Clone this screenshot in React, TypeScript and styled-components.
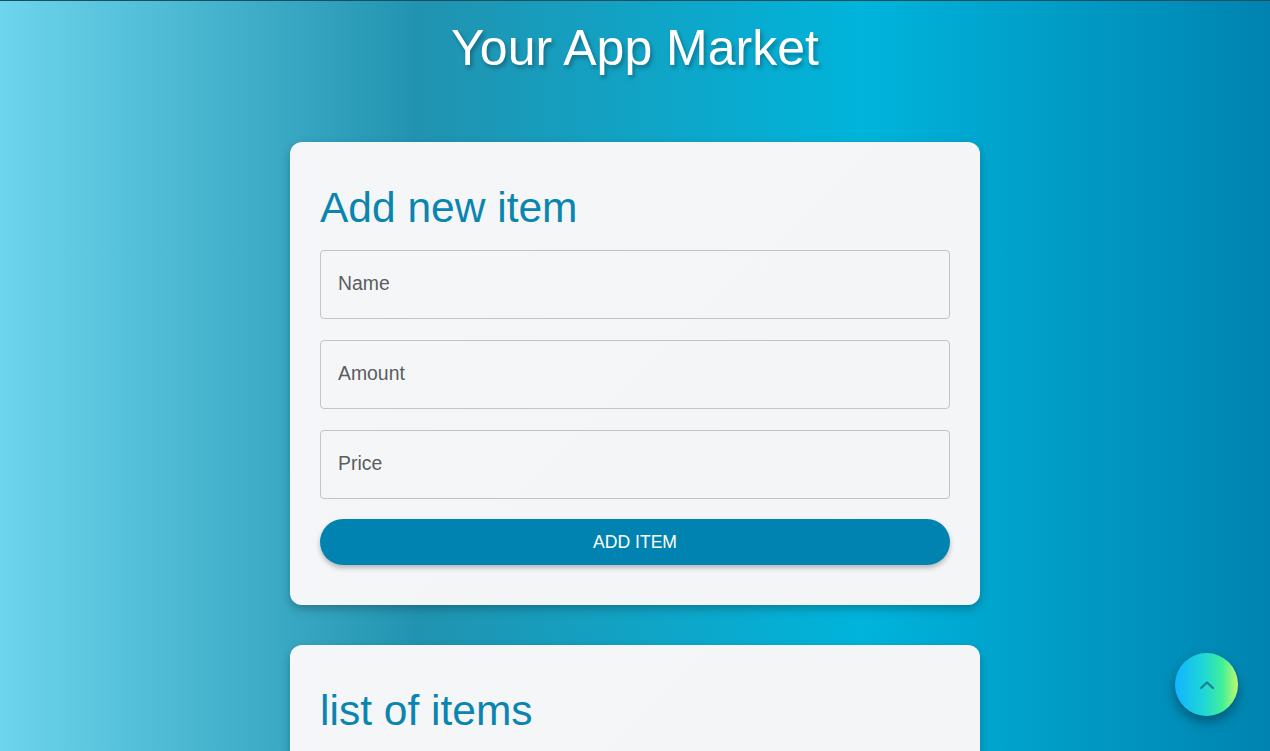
import React from "react";
import styled, { createGlobalStyle } from "styled-components";

const Global = createGlobalStyle`
  html, body { margin: 0; padding: 0; }
  body {
    font-family: "Liberation Sans", Arial, sans-serif;
    overflow: hidden;
  }
  * { box-sizing: border-box; }
`;

const Page = styled.div`
  min-height: 100vh;
  border-top: 1px solid #1b4f5e;
  background: linear-gradient(to right, #6dd5ed 0%, #2193b0 33%, #00b4db 68%, #0083b0 100%);
  display: flex;
  flex-direction: column;
  align-items: center;
  padding-bottom: 40px;
`;

const Title = styled.h1`
  margin: 20px 0 66px;
  font-size: 50px;
  font-weight: 400;
  color: #fff;
  text-shadow: 2px 3px 4px rgba(0, 0, 0, 0.3);
  line-height: 55px;
`;

const Card = styled.section`
  width: 690px;
  background: linear-gradient(135deg, #f5f6f7, #f3f5f7);
  border-radius: 12px;
  box-shadow: 0 4px 10px rgba(0, 0, 0, 0.25);
  padding: 30px 30px 40px;
  display: flex;
  flex-direction: column;
  margin-bottom: 40px;
`;

const CardTitle = styled.h2`
  margin: 12px 0 19px;
  font-size: 42.5px;
  line-height: 47px;
  font-weight: 400;
  color: #0a85b0;
`;

const Form = styled.form`
  display: flex;
  flex-direction: column;
  gap: 21px;
`;

const Input = styled.input`
  height: 69px;
  width: 100%;
  border: 1px solid #c2c4c6;
  border-radius: 4px;
  background: transparent;
  padding: 0 17px 3px;
  font-family: "Liberation Sans", Arial, sans-serif;
  font-size: 19.4px;
  color: #333;
  outline: none;
  &::placeholder { color: #5a5d61; }
`;

const Button = styled.button`
  margin-top: -1px;
  height: 46px;
  border: none;
  border-radius: 23px;
  background: #0083b0;
  color: #fff;
  font-family: "Liberation Sans", Arial, sans-serif;
  font-size: 17.6px;
  text-transform: uppercase;
  box-shadow: 0 3px 5px rgba(0, 0, 0, 0.25);
  cursor: pointer;
`;

const Fab = styled.button`
  position: fixed;
  left: 1175px;
  top: 653px;
  width: 63px;
  height: 63px;
  border-radius: 50%;
  border: none;
  background: linear-gradient(to right, #12b4ff 0%, #1fd6d8 45%, #3fef9a 75%, #c4f76a 100%);
  box-shadow: 0 6px 12px rgba(0, 0, 0, 0.35);
  display: flex;
  align-items: center;
  justify-content: center;
  padding: 0;
  cursor: pointer;
`;

export default function App() {
  return (
    <>
      <Global />
      <Page>
        <Title>Your App Market</Title>
        <Card>
          <CardTitle>Add new item</CardTitle>
          <Form onSubmit={(e) => e.preventDefault()}>
            <Input placeholder="Name" />
            <Input placeholder="Amount" />
            <Input placeholder="Price" />
            <Button type="submit">Add item</Button>
          </Form>
        </Card>
        <Card>
          <CardTitle>list of items</CardTitle>
        </Card>
      </Page>
      <Fab aria-label="scroll to top">
        <svg width="16" height="10" viewBox="0 0 16 10" fill="none">
          <path d="M2 8 L8 2.5 L14 8" stroke="#1a7f96" strokeWidth="2.2" strokeLinecap="round" strokeLinejoin="round" />
        </svg>
      </Fab>
    </>
  );
}
